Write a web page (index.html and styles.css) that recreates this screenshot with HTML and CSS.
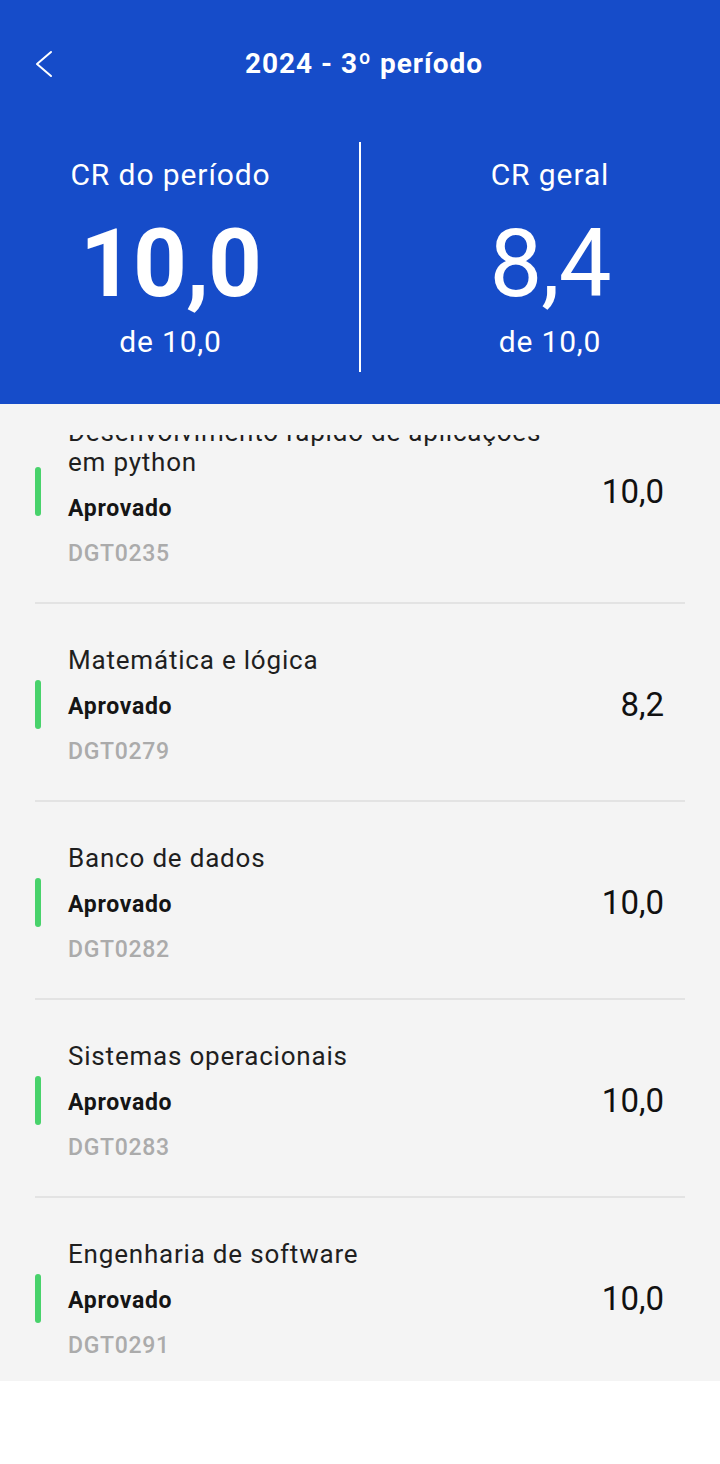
FILE: index.html
```html
<!DOCTYPE html>
<html lang="pt-BR">
<head>
<meta charset="utf-8">
<title>2024 - 3º período</title>
<link rel="stylesheet" href="styles.css">
</head>
<body>
<div class="screen">
  <header class="header">
    <div class="topbar">
      <button class="back" aria-label="Voltar">
        <svg width="24" height="30" viewBox="0 0 24 30"><polyline points="19,3 5,15 19,27" fill="none" stroke="#fff" stroke-width="2" stroke-linecap="round" stroke-linejoin="round"/></svg>
      </button>
      <h1 class="title">2024 - 3º período</h1>
    </div>
    <div class="stats">
      <div class="stat stat-left">
        <div class="stat-label">CR do período</div>
        <div class="stat-value bold">10,0</div>
        <div class="stat-sub">de 10,0</div>
      </div>
      <div class="divider"></div>
      <div class="stat stat-right">
        <div class="stat-label">CR geral</div>
        <div class="stat-value">8,4</div>
        <div class="stat-sub">de 10,0</div>
      </div>
    </div>
  </header>
  <main class="list-viewport">
    <div class="list-clip">
      <ul class="list">
        <li class="item">
          <span class="bar"></span>
          <div class="info">
            <div class="name">Desenvolvimento rápido de aplicações em python</div>
            <div class="status">Aprovado</div>
            <div class="code">DGT0235</div>
          </div>
          <div class="grade">10,0</div>
        </li>
        <li class="item">
          <span class="bar"></span>
          <div class="info">
            <div class="name">Matemática e lógica</div>
            <div class="status">Aprovado</div>
            <div class="code">DGT0279</div>
          </div>
          <div class="grade">8,2</div>
        </li>
        <li class="item">
          <span class="bar"></span>
          <div class="info">
            <div class="name">Banco de dados</div>
            <div class="status">Aprovado</div>
            <div class="code">DGT0282</div>
          </div>
          <div class="grade">10,0</div>
        </li>
        <li class="item">
          <span class="bar"></span>
          <div class="info">
            <div class="name">Sistemas operacionais</div>
            <div class="status">Aprovado</div>
            <div class="code">DGT0283</div>
          </div>
          <div class="grade">10,0</div>
        </li>
        <li class="item">
          <span class="bar"></span>
          <div class="info">
            <div class="name">Engenharia de software</div>
            <div class="status">Aprovado</div>
            <div class="code">DGT0291</div>
          </div>
          <div class="grade">10,0</div>
        </li>
      </ul>
    </div>
  </main>
</div>
</body>
</html>
```
FILE: styles.css
```css
* { box-sizing: border-box; }
html, body { margin: 0; padding: 0; background: #ffffff; }
body { font-family: Roboto, "Noto Sans", Arial, sans-serif; }

.screen { width: 720px; }

.header {
  background: #164cc9;
  color: #ffffff;
  height: 404px;
  display: flex;
  flex-direction: column;
}

.topbar {
  height: 128px;
  display: grid;
  grid-template-columns: 1fr auto 1fr;
  align-items: center;
  padding: 0 24px 0 32px;
}
.back {
  grid-column: 1;
  justify-self: start;
  background: none;
  border: 0;
  padding: 0;
  width: 24px;
  height: 30px;
  display: flex;
  cursor: pointer;
}
.title {
  grid-column: 2;
  margin: 0;
  font-size: 28px;
  font-weight: 700;
  line-height: 1;
  letter-spacing: 1px;
}

.stats {
  display: grid;
  grid-template-columns: 1fr 2px 1fr;
  padding: 14px 0 32px;
  flex: 1;
}
.divider { background: #ffffff; }
.stat {
  display: flex;
  flex-direction: column;
  align-items: center;
  padding-top: 15px;
}
.stat-left { padding-right: 18px; }
.stat-right { padding-left: 19px; }
.stat-label {
  font-size: 30px;
  line-height: 36px;
  letter-spacing: 0.9px;
}
.stat-value {
  font-size: 94px;
  line-height: 100px;
  margin-top: 21px;
  font-weight: 400;
  letter-spacing: -1px;
}
.stat-value.bold { font-weight: 700; }
.stat-sub {
  font-size: 30px;
  line-height: 36px;
  margin-top: 10px;
  letter-spacing: 0.8px;
}

.list-viewport {
  height: 977px;
  padding-top: 31px;
  background: #f4f4f4;
}
.list-clip {
  height: 100%;
  overflow: hidden;
}
.list {
  list-style: none;
  margin: -59px 0 0;
  padding: 0 35px;
}
.item {
  display: flex;
  align-items: center;
  padding: 41px 21px 32px 0;
  border-top: 2px solid #e3e3e3;
}
.item:first-child { border-top: 0; }
.bar {
  width: 6px;
  height: 49px;
  border-radius: 3px;
  background: #48d26b;
  flex: none;
  margin-right: 27px;
  margin-top: -4px;
}
.info { flex: 1; min-width: 0; }
.name {
  font-size: 26px;
  line-height: 30px;
  letter-spacing: 0.8px;
  color: #1f1f1f;
  max-width: 500px;
}
.status {
  font-size: 23px;
  line-height: 32px;
  font-weight: 700;
  letter-spacing: 0.7px;
  color: #151515;
  margin-top: 16px;
}
.code {
  font-size: 23px;
  line-height: 32px;
  font-weight: 500;
  letter-spacing: 0.7px;
  color: #ababab;
  margin-top: 13px;
}
.grade {
  font-size: 33px;
  line-height: 36px;
  color: #111111;
  margin-top: -4px;
}
```
